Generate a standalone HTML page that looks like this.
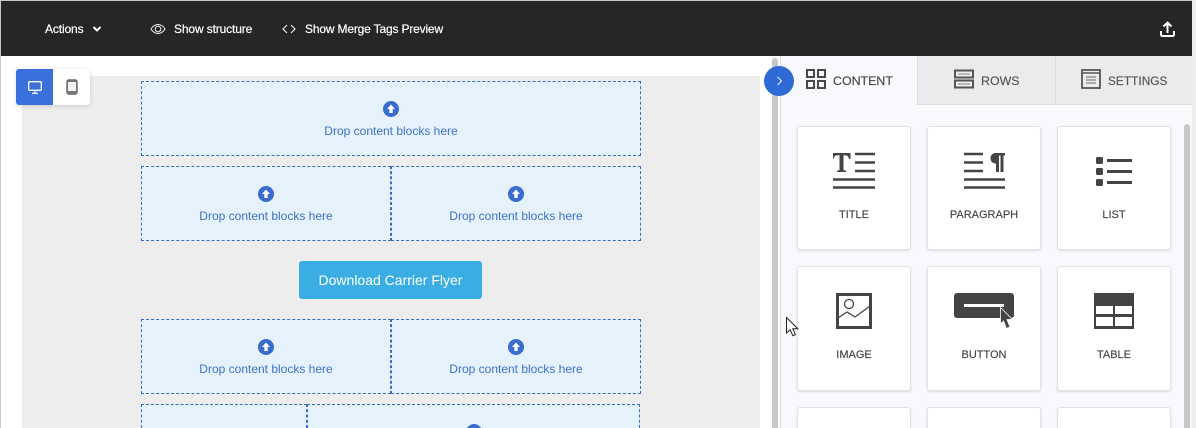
<!DOCTYPE html>
<html><head><meta charset="utf-8"><style>
html,body{margin:0;padding:0;width:1196px;height:428px;overflow:hidden;background:#fff;font-family:"Liberation Sans",sans-serif}
.a{position:absolute}
#root{position:relative;width:1196px;height:428px;overflow:hidden}
.t{position:absolute;white-space:nowrap;line-height:16px}
.tb{-webkit-text-stroke:.2px #fff;letter-spacing:-.13px;font-size:12px;color:#fff}
.dz{position:absolute;background:#e5f2fc;border:1px dashed #3a6cc4;box-sizing:border-box}
.dz .ic{position:absolute;left:50%;top:19px;margin-left:-8px;width:16px;height:16px}
.dz .l{position:absolute;left:0;right:0;top:41px;text-align:center;font-size:12px;line-height:16px;color:#3f70c8;white-space:nowrap}
.card{position:absolute;width:114px;background:#fff;border:1px solid #e3e3e6;box-sizing:border-box;border-radius:3px;box-shadow:0 1px 2px rgba(0,0,0,.12)}
.card .l{position:absolute;left:0;right:0;top:80px;text-align:center;font-size:11px;line-height:16px;color:#444;-webkit-text-stroke:.15px #444}
.card svg{position:absolute;left:0;top:0}
</style></head><body><div id="root">
<div class="a" style="left:0;top:0;width:1196px;height:1px;background:#c8c8c8"></div>
<div class="a" style="left:0;top:0;width:1px;height:428px;background:#c8c8c8"></div>
<div class="a" style="left:1px;top:1px;width:1191px;height:55px;background:#262626"></div>
<div class="a" style="left:1192px;top:0;width:4px;height:428px;background:#eee"></div>

<div class="t tb" style="left:45px;top:21px">Actions</div>
<svg class="a" style="left:91px;top:24px" width="12" height="10"><path d="M2.500 3l3.500 3.500L9.500 3" fill="none" stroke="#fff" stroke-width="2"/></svg>
<svg class="a" style="left:150px;top:22px" width="16" height="14" viewBox="0 0 16 14"><path d="M1 7c2-3.200 4.300-4.500 7-4.500S13 3.800 15 7c-2 3.200-4.300 4.500-7 4.500S3 10.200 1 7z" fill="none" stroke="#e8e8e8" stroke-width="1.100"/><circle cx="8" cy="7" r="2.800" fill="none" stroke="#e8e8e8" stroke-width="1.100"/></svg>
<div class="t tb" style="left:174px;top:21px">Show structure</div>
<svg class="a" style="left:282px;top:23px" width="14" height="12"><path d="M5 2L1 6l4 4M9 2l4 4-4 4" fill="none" stroke="#e8e8e8" stroke-width="1.200"/></svg>
<div class="t tb" style="left:305px;top:21px;letter-spacing:-.17px">Show Merge Tags Preview</div>
<svg class="a" style="left:1159px;top:20px" width="17" height="18" viewBox="0 0 17 18"><path d="M8.500 13V2.500M4.500 6.500l4-4 4 4M2 11v3.500q0 1.500 1.500 1.500h10q1.500 0 1.500-1.500V11" fill="none" stroke="#fff" stroke-width="2"/></svg>

<div class="a" style="left:22px;top:76px;width:738px;height:352px;background:#eeeded"></div>

<div class="dz" style="left:141px;top:81px;width:500px;height:75px"><svg class="ic" viewBox="0 0 16 16"><circle cx="8" cy="8" r="8" fill="#3a6cd0"/><path d="M8 3.500L12 8H9.700v4H6.300V8H4z" fill="#fff"/></svg><div class="l">Drop content blocks here</div></div>
<div class="dz" style="left:141px;top:166px;width:250px;height:75px"><svg class="ic" viewBox="0 0 16 16"><circle cx="8" cy="8" r="8" fill="#3a6cd0"/><path d="M8 3.500L12 8H9.700v4H6.300V8H4z" fill="#fff"/></svg><div class="l">Drop content blocks here</div></div>
<div class="dz" style="left:391px;top:166px;width:250px;height:75px"><svg class="ic" viewBox="0 0 16 16"><circle cx="8" cy="8" r="8" fill="#3a6cd0"/><path d="M8 3.500L12 8H9.700v4H6.300V8H4z" fill="#fff"/></svg><div class="l">Drop content blocks here</div></div>
<div class="a" style="left:299px;top:261px;width:183px;height:38px;background:#3aaee3;border-radius:3px;color:#fff;font-size:14px;line-height:38px;text-align:center">Download Carrier Flyer</div>
<div class="dz" style="left:141px;top:319px;width:250px;height:75px"><svg class="ic" viewBox="0 0 16 16"><circle cx="8" cy="8" r="8" fill="#3a6cd0"/><path d="M8 3.500L12 8H9.700v4H6.300V8H4z" fill="#fff"/></svg><div class="l">Drop content blocks here</div></div>
<div class="dz" style="left:391px;top:319px;width:250px;height:75px"><svg class="ic" viewBox="0 0 16 16"><circle cx="8" cy="8" r="8" fill="#3a6cd0"/><path d="M8 3.500L12 8H9.700v4H6.300V8H4z" fill="#fff"/></svg><div class="l">Drop content blocks here</div></div>
<div class="dz" style="left:141px;top:404px;width:166px;height:24px;border-bottom:0"></div>
<div class="dz" style="left:307px;top:404px;width:333px;height:24px;border-bottom:0;overflow:hidden"><svg class="ic" viewBox="0 0 16 16"><circle cx="8" cy="8" r="8" fill="#3a6cd0"/><path d="M8 3.500L12 8H9.700v4H6.300V8H4z" fill="#fff"/></svg></div>

<div class="a" style="left:16px;top:69px;width:74px;height:36px;background:#fff;border-radius:3px;box-shadow:0 1px 5px rgba(0,0,0,.15)"></div>
<div class="a" style="left:16px;top:69px;width:37px;height:36px;background:#3a70dc;border-radius:3px 0 0 3px"></div>
<svg class="a" style="left:28px;top:81px" width="14" height="13" viewBox="0 0 14 13"><rect x=".7" y=".7" width="12.600" height="8.600" rx="1" fill="none" stroke="#fff" stroke-width="1.300"/><path d="M7 10v2M4 12.300h6" stroke="#fff" stroke-width="1.200"/></svg>
<svg class="a" style="left:66px;top:79px" width="12" height="16" viewBox="0 0 12 16"><rect x=".8" y=".8" width="10.400" height="14.400" rx="2" fill="#777" stroke="#666" stroke-width="1"/><rect x="2" y="3" width="8" height="9" fill="#f4f4f4"/></svg>

<div class="a" style="left:772px;top:58px;width:6px;height:370px;background:#c8c8c8;border-radius:3px 3px 0 0"></div>
<div class="a" style="left:780px;top:56px;width:412px;height:372px;background:#f8f9fd;border-left:1px solid #dcdcdc;box-sizing:border-box"></div>
<div class="a" style="left:917px;top:56px;width:275px;height:49px;background:#ebebed;border-left:1px solid #dcdcdc;border-bottom:1px solid #dcdcdc;box-sizing:border-box"></div>
<div class="a" style="left:1055px;top:56px;width:1px;height:49px;background:#dedede"></div>

<svg class="a" style="left:806px;top:69px" width="20" height="20" viewBox="0 0 20 20"><g fill="none" stroke="#484848" stroke-width="2"><rect x="1" y="1" width="7" height="7"/><rect x="12" y="1" width="7" height="7"/><rect x="1" y="12" width="7" height="7"/><rect x="12" y="12" width="7" height="7"/></g></svg>
<div class="t" style="left:833px;top:73px;font-size:12.4px;color:#444;-webkit-text-stroke:.15px #444">CONTENT</div>
<svg class="a" style="left:954px;top:69px" width="20" height="20" viewBox="0 0 20 20"><g fill="none" stroke="#555" stroke-width="2"><rect x="1" y="1.500" width="18" height="7"/><rect x="1" y="11.500" width="18" height="7"/></g><path d="M4 5h12M4 15h12" stroke="#888"/></svg>
<div class="t" style="left:981px;top:73px;font-size:12.4px;color:#555;-webkit-text-stroke:.15px #555">ROWS</div>
<svg class="a" style="left:1081px;top:69px" width="20" height="20" viewBox="0 0 20 20"><rect x="1" y="1" width="18" height="18" fill="none" stroke="#555" stroke-width="1.800"/><path d="M1 4h18" stroke="#555" stroke-width="1.500"/><path d="M5 8h10M5 11h10M5 14h10" stroke="#666"/></svg>
<div class="t" style="left:1108px;top:73px;font-size:11.9px;color:#555;-webkit-text-stroke:.15px #555">SETTINGS</div>

<div class="a" style="left:764px;top:66px;width:30px;height:30px;border-radius:50%;background:#2f6bd6"></div>
<svg class="a" style="left:775px;top:75px" width="9" height="12"><path d="M2.500 2l4 4-4 4" fill="none" stroke="#dfe9fa" stroke-width="1.200"/></svg>

<div class="a" style="left:1184px;top:124px;width:6px;height:304px;background:#c8c8c8;border-radius:3px 3px 0 0"></div>

<div class="card" style="left:797px;top:126px;height:124px"><svg width="112" height="90"><path d="M35 26h17.500v6h-1.500q-.5-3.500-3.500-3.800H45.500V43l2.500.7V45H39v-1.300l2.500-.7V28.200H39q-3 .3-3.500 3.800H35z" fill="#444"/><path d="M57 27h20M57 35.500h20M57 44h20M35 52.500h42M35 60.500h42" stroke="#444" stroke-width="2.600"/></svg><div class="l">TITLE</div></div>
<div class="card" style="left:927px;top:126px;height:124px"><svg width="112" height="90"><path d="M36 27h19M36 35.500h19M36 44h19M36 52.500h41M36 60.500h41" stroke="#444" stroke-width="2.600"/><path d="M65 26h12v2.500h-1.500V45h-3V28.500h-1.500V45h-3V36.500c-3.300 0-5.500-2.300-5.500-5.300s2.200-5.200 5-5.200z" fill="#444"/></svg><div class="l">PARAGRAPH</div></div>
<div class="card" style="left:1057px;top:126px;height:124px"><svg width="112" height="90"><rect x="38" y="30" width="7" height="7" rx="1.500" fill="#444"/><rect x="38" y="41" width="7" height="7" rx="1.500" fill="#444"/><rect x="38" y="52" width="7" height="7" rx="1.500" fill="#444"/><path d="M49 33.500h25M49 44.500h25M49 55.500h25" stroke="#444" stroke-width="3"/></svg><div class="l">LIST</div></div>

<div class="card" style="left:797px;top:266px;height:125px"><svg width="112" height="90"><rect x="39.500" y="27.500" width="33" height="33" fill="none" stroke="#444" stroke-width="3"/><circle cx="51" cy="37" r="4.500" fill="none" stroke="#444" stroke-width="1.300"/><path d="M40 51l9-6 8 5 15-11" fill="none" stroke="#444" stroke-width="1.300"/></svg><div class="l">IMAGE</div></div>
<div class="card" style="left:927px;top:266px;height:125px"><svg width="112" height="90"><rect x="26" y="26" width="60" height="25" rx="3" fill="#444"/><path d="M36 38.500h40" stroke="#fff" stroke-width="3"/><path d="M72.500 40.500L84.500 52.500H79L82 60l-3.500 1.500L75.500 54l-3 3z" fill="#444" stroke="#fff" stroke-width=".8"/></svg><div class="l">BUTTON</div></div>
<div class="card" style="left:1057px;top:266px;height:125px"><svg width="112" height="90"><rect x="36" y="26" width="40" height="36" fill="#444"/><rect x="38" y="39" width="17" height="8" fill="#fff"/><rect x="57" y="39" width="17" height="8" fill="#fff"/><rect x="38" y="50" width="17" height="9" fill="#fff"/><rect x="57" y="50" width="17" height="9" fill="#fff"/></svg><div class="l">TABLE</div></div>

<div class="card" style="left:797px;top:407px;height:21px;border-bottom:0;border-radius:3px 3px 0 0"></div>
<div class="card" style="left:927px;top:407px;height:21px;border-bottom:0;border-radius:3px 3px 0 0"></div>
<div class="card" style="left:1057px;top:407px;height:21px;border-bottom:0;border-radius:3px 3px 0 0"></div>

<svg class="a" style="left:785px;top:316px" width="15" height="22" viewBox="0 0 15 22"><path d="M1.500 1.500V17l3.700-3.300 2.600 6 2.600-1.100-2.600-5.900h5z" fill="#fff" stroke="#222" stroke-width="1"/></svg>
</div></body></html>
